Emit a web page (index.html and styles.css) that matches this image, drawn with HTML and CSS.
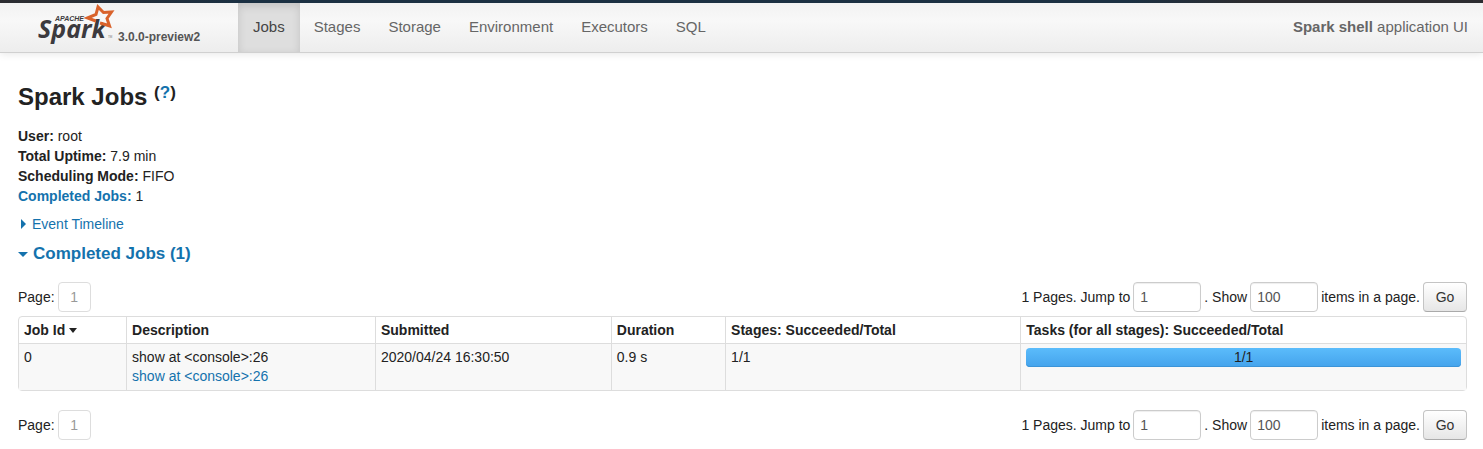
FILE: index.html
```html
<!DOCTYPE html>
<html lang="en">
<head>
<meta charset="utf-8">
<title>Spark shell - Spark Jobs</title>
<link rel="stylesheet" href="styles.css">
</head>
<body>
<header class="navbar">
  <a class="brand" href="#">
    <svg class="logo" viewBox="0 0 76 40" role="img" aria-label="Apache Spark">
      <text class="logo-name" x="0" y="35">Spark</text>
      <text class="logo-apache" x="17" y="18">APACHE</text>
      <path class="logo-star" d="M69 22 L62 20 M56 19 L56.500 17.500 L49.500 15 L58 11.500 L60 4 L65.500 9.500 L73.500 9 L69 15.500 L71.500 23 L64 20.500"/>
      <text class="logo-tm" x="70" y="35">TM</text>
    </svg>
    <span class="version">3.0.0-preview2</span>
  </a>
  <nav class="nav">
    <a class="nav-link active" href="#">Jobs</a>
    <a class="nav-link" href="#">Stages</a>
    <a class="nav-link" href="#">Storage</a>
    <a class="nav-link" href="#">Environment</a>
    <a class="nav-link" href="#">Executors</a>
    <a class="nav-link" href="#">SQL</a>
  </nav>
  <p class="app-name"><strong>Spark shell</strong> application UI</p>
</header>
<main class="content">
  <h1 class="title">Spark Jobs <sup class="help">(<a href="#">?</a>)</sup></h1>
  <ul class="summary">
    <li><strong>User:</strong> root</li>
    <li><strong>Total Uptime:</strong> 7.9 min</li>
    <li><strong>Scheduling Mode:</strong> FIFO</li>
    <li><a href="#completed"><strong>Completed Jobs:</strong></a> 1</li>
  </ul>
  <a class="timeline" href="#"><span class="arrow-right"></span>Event Timeline</a>
  <h2 class="section" id="completed"><a class="section-link" href="#completed"><span class="arrow-down"></span>Completed Jobs (1)</a></h2>

  <form class="pager">
    <span class="page-list">Page: <a class="page-number" href="#">1</a></span>
    <label for="jump-top">1 Pages. Jump to</label>
    <input class="field" id="jump-top" type="text" value="1">
    <label class="show" for="size-top">. Show</label>
    <input class="field" id="size-top" type="text" value="100">
    <span class="items">items in a page.</span>
    <button class="go" type="button">Go</button>
  </form>

  <table class="jobs">
    <colgroup>
      <col class="col-id"><col class="col-description"><col class="col-submitted"><col class="col-duration"><col class="col-stages"><col class="col-tasks">
    </colgroup>
    <thead>
      <tr>
        <th>Job Id <span class="sort"></span></th>
        <th>Description</th>
        <th>Submitted</th>
        <th>Duration</th>
        <th>Stages: Succeeded/Total</th>
        <th>Tasks (for all stages): Succeeded/Total</th>
      </tr>
    </thead>
    <tbody>
      <tr>
        <td>0</td>
        <td>show at &lt;console&gt;:26<br><a href="#">show at &lt;console&gt;:26</a></td>
        <td>2020/04/24 16:30:50</td>
        <td>0.9 s</td>
        <td>1/1</td>
        <td><div class="progress">1/1</div></td>
      </tr>
    </tbody>
  </table>

  <form class="pager">
    <span class="page-list">Page: <a class="page-number" href="#">1</a></span>
    <label for="jump-bottom">1 Pages. Jump to</label>
    <input class="field" id="jump-bottom" type="text" value="1">
    <label class="show" for="size-bottom">. Show</label>
    <input class="field" id="size-bottom" type="text" value="100">
    <span class="items">items in a page.</span>
    <button class="go" type="button">Go</button>
  </form>
</main>
</body>
</html>
```
FILE: styles.css
```css
* {
  box-sizing: border-box;
}

body {
  margin: 0;
  background: #fff;
  color: #222;
  font: 14px/20px "Liberation Sans", Arial, sans-serif;
}

a {
  color: #1472ad;
  text-decoration: none;
}

.navbar {
  display: flex;
  height: 53px;
  padding: 3px 15px 0 0;
  border-bottom: 1px solid #d0d0d0;
  background:
    linear-gradient(90deg, #2c2c30, #1b3042 16%, #1b3042 76%, #2c2c30 84%) top / 100% 3px no-repeat,
    linear-gradient(#f1f1f1, #f8f8f8 40%, #ededed);
  box-shadow: 0 1px 8px rgba(0, 0, 0, 0.1);
  color: #666;
  font-size: 15px;
}

.brand {
  display: flex;
  flex: none;
  align-items: flex-start;
  gap: 4px;
  width: 238px;
  padding-left: 38px;
}

.logo {
  width: 76px;
  height: 40px;
  overflow: visible;
}

.logo-name {
  fill: #3c3a3e;
  font: italic 700 25px "Open Sans", sans-serif;
}

.logo-apache {
  fill: #3c3a3e;
  font: italic 700 7px "Liberation Sans", sans-serif;
}

.logo-tm {
  fill: #777;
  font: 3px "Liberation Sans", sans-serif;
}

.logo-star {
  fill: none;
  stroke: #d9622b;
  stroke-width: 3;
}

.version {
  padding-top: 25px;
  color: #555;
  font-size: 12px;
  font-weight: bold;
  line-height: 18px;
}

.nav {
  display: flex;
  flex: 1;
}

.nav-link {
  padding: 14px;
  color: #666;
}

.nav-link.active {
  padding: 14px 15px;
  background: #dedede;
  box-shadow: inset 0 3px 8px rgba(0, 0, 0, 0.13);
  color: #444;
}

.app-name {
  margin: 0;
  padding: 14px 0;
}

.content {
  padding: 24px 16px 10px 18px;
}

.title {
  margin: 0 0 9px;
  font-size: 24px;
  line-height: 40px;
}

.help {
  font-size: 17px;
  line-height: 0;
  vertical-align: 7px;
}

.summary {
  margin: 0;
  padding: 0;
  list-style: none;
}

.timeline {
  display: flex;
  align-items: center;
  gap: 6px;
  margin: 8px 0 10px 3px;
}

.arrow-right {
  border-left: 5px solid currentColor;
  border-top: 5px solid transparent;
  border-bottom: 5px solid transparent;
}

.arrow-down,
.sort {
  display: inline-block;
  border-top: 5px solid currentColor;
  border-left: 5px solid transparent;
  border-right: 5px solid transparent;
}

.section {
  margin: 0 0 18px;
  font-size: 17px;
  line-height: 20px;
}

.section-link {
  display: flex;
  align-items: center;
  gap: 5px;
}

.pager {
  display: flex;
  align-items: center;
  height: 30px;
}

.page-list {
  display: flex;
  align-items: center;
  gap: 3px;
  margin-right: auto;
}

.page-number {
  width: 33px;
  padding: 4px 0;
  border: 1px solid #ddd;
  border-radius: 4px;
  color: #999;
  text-align: center;
}

.field {
  width: 68px;
  height: 30px;
  margin: 0 3px;
  padding: 4px 6px;
  border: 1px solid #ccc;
  border-radius: 4px;
  background: #fff;
  box-shadow: inset 0 1px 1px rgba(0, 0, 0, 0.07);
  color: #555;
  font: inherit;
}

.go {
  width: 44px;
  height: 30px;
  margin-left: 3px;
  padding: 0;
  border: 1px solid #c4c4c4;
  border-bottom-color: #aaa;
  border-radius: 4px;
  background: linear-gradient(#fff, #e6e6e6);
  color: #333;
  font: inherit;
}

.jobs {
  width: 100%;
  margin: 4px 0 19px;
  border: 1px solid #ddd;
  border-radius: 4px;
  border-spacing: 0;
  table-layout: fixed;
  line-height: 19px;
}

.col-id { width: 7.4%; }
.col-description { width: 17.2%; }
.col-submitted { width: 16.3%; }
.col-duration { width: 7.9%; }
.col-stages { width: 20.4%; }
.col-tasks { width: 30.8%; }

.jobs th,
.jobs td {
  padding: 4px 5px;
  border-left: 1px solid #ddd;
  text-align: left;
  vertical-align: top;
}

.jobs th {
  padding-bottom: 3px;
}

.jobs th:first-child,
.jobs td:first-child {
  border-left: 0;
}

.jobs td {
  border-top: 1px solid #ddd;
  background: #f8f8f8;
}

.sort {
  border-width: 5px 4px 0;
  vertical-align: 2px;
}

.progress {
  border-radius: 4px;
  background: linear-gradient(#5bbcfb, #44a3ec);
  box-shadow: inset 0 -1px 0 #3b94d8;
  text-align: center;
}
```
